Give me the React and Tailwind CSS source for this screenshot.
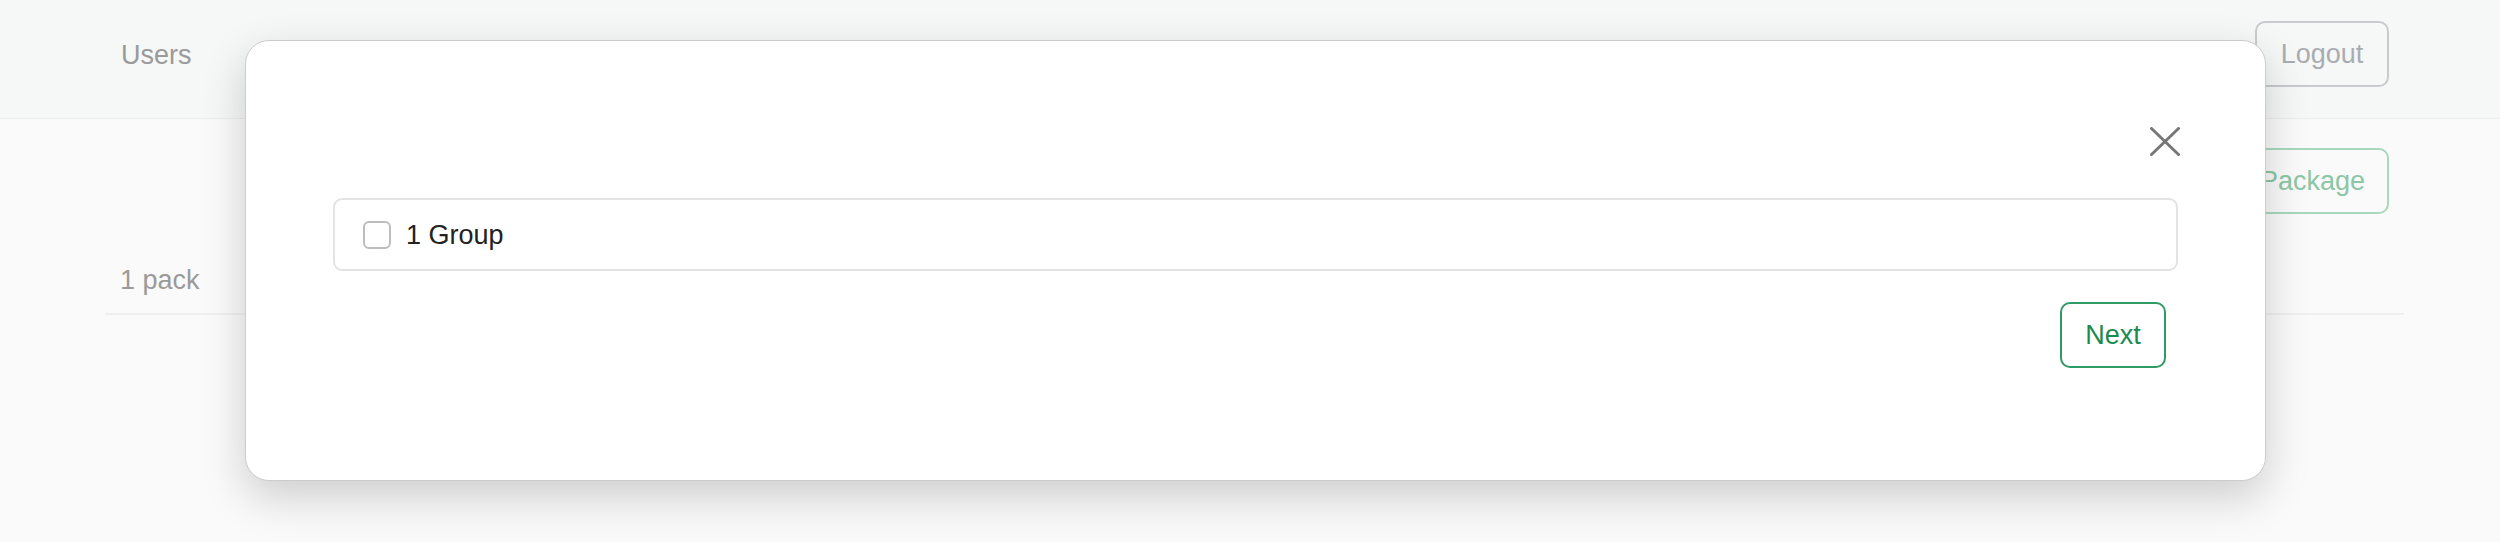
import React, { useState } from "react";

const font = { fontFamily: '"Liberation Sans", Arial, Helvetica, sans-serif' };

function CloseIcon() {
  return (
    <svg width="30" height="29" viewBox="0 0 30 29" fill="none">
      <path d="M1.5 1.5 28.5 27.5M28.5 1.5 1.5 27.5" stroke="#777" strokeWidth="3" strokeLinecap="round" />
    </svg>
  );
}

function GroupModal() {
  const [checked, setChecked] = useState(false);
  return (
    <div className="absolute left-[245px] top-[40px] w-[2021px] h-[441px] rounded-[24px] bg-white border border-[#cccccc] shadow-[0_16px_44px_rgba(0,0,0,0.18)] px-[87px]">
      <div className="flex justify-end pt-[86px] h-[157px]">
        <button className="w-[30px] h-[29px] -mr-[2px]">
          <CloseIcon />
        </button>
      </div>

      <label className="flex items-center h-[73px] rounded-[9px] border-2 border-[#e3e3e3] pl-[28px] cursor-pointer">
        <span
          onClick={() => setChecked((v) => !v)}
          className="w-[28px] h-[28px] rounded-[6px] border-2 border-[#bdbdbd] bg-white"
        />
        <span className="ml-[15px] text-[27px] leading-[34px] text-[#222]">1 Group</span>
      </label>

      <div className="flex justify-end pr-[12px] mt-[31px]">
        <button className="h-[66px] w-[106px] rounded-[10px] border-2 border-[#2f9a63] text-[27px] text-[#1b8a4e]">
          Next
        </button>
      </div>
    </div>
  );
}

export default function App() {
  return (
    <div className="relative w-[2500px] h-[542px] bg-[#fafafa] overflow-hidden" style={font}>
      {/* barra superior */}
      <div className="h-[119px] bg-[#f6f7f7] border-b border-[#ececec]">
        <div className="ml-[105px] w-[2299px] px-[15px] pt-[21px] flex justify-between items-center">
          <div className="h-[66px] flex items-center text-[27px] text-[#9a9a9a] pl-[1px] pt-[2px]">Users</div>
          <button className="h-[66px] w-[134px] rounded-[10px] border-2 border-[#c8cbce] text-[27px] text-[#a9adb1]">
            Logout
          </button>
        </div>
      </div>

      <div className="ml-[105px] w-[2299px]">
        <div className="flex justify-end px-[15px] pt-[29px]">
          <button className="h-[66px] px-[22px] rounded-[10px] border-2 border-[#a9d8bc] text-[27px] text-[#8cc7a5]">
            Add Package
          </button>
        </div>
        <div className="px-[15px] pt-[49px] pb-[16px] border-b-2 border-[#efefef] text-[27px] leading-[34px] text-[#9a9a9a]">
          1 pack
        </div>
      </div>

      <GroupModal />
    </div>
  );
}
